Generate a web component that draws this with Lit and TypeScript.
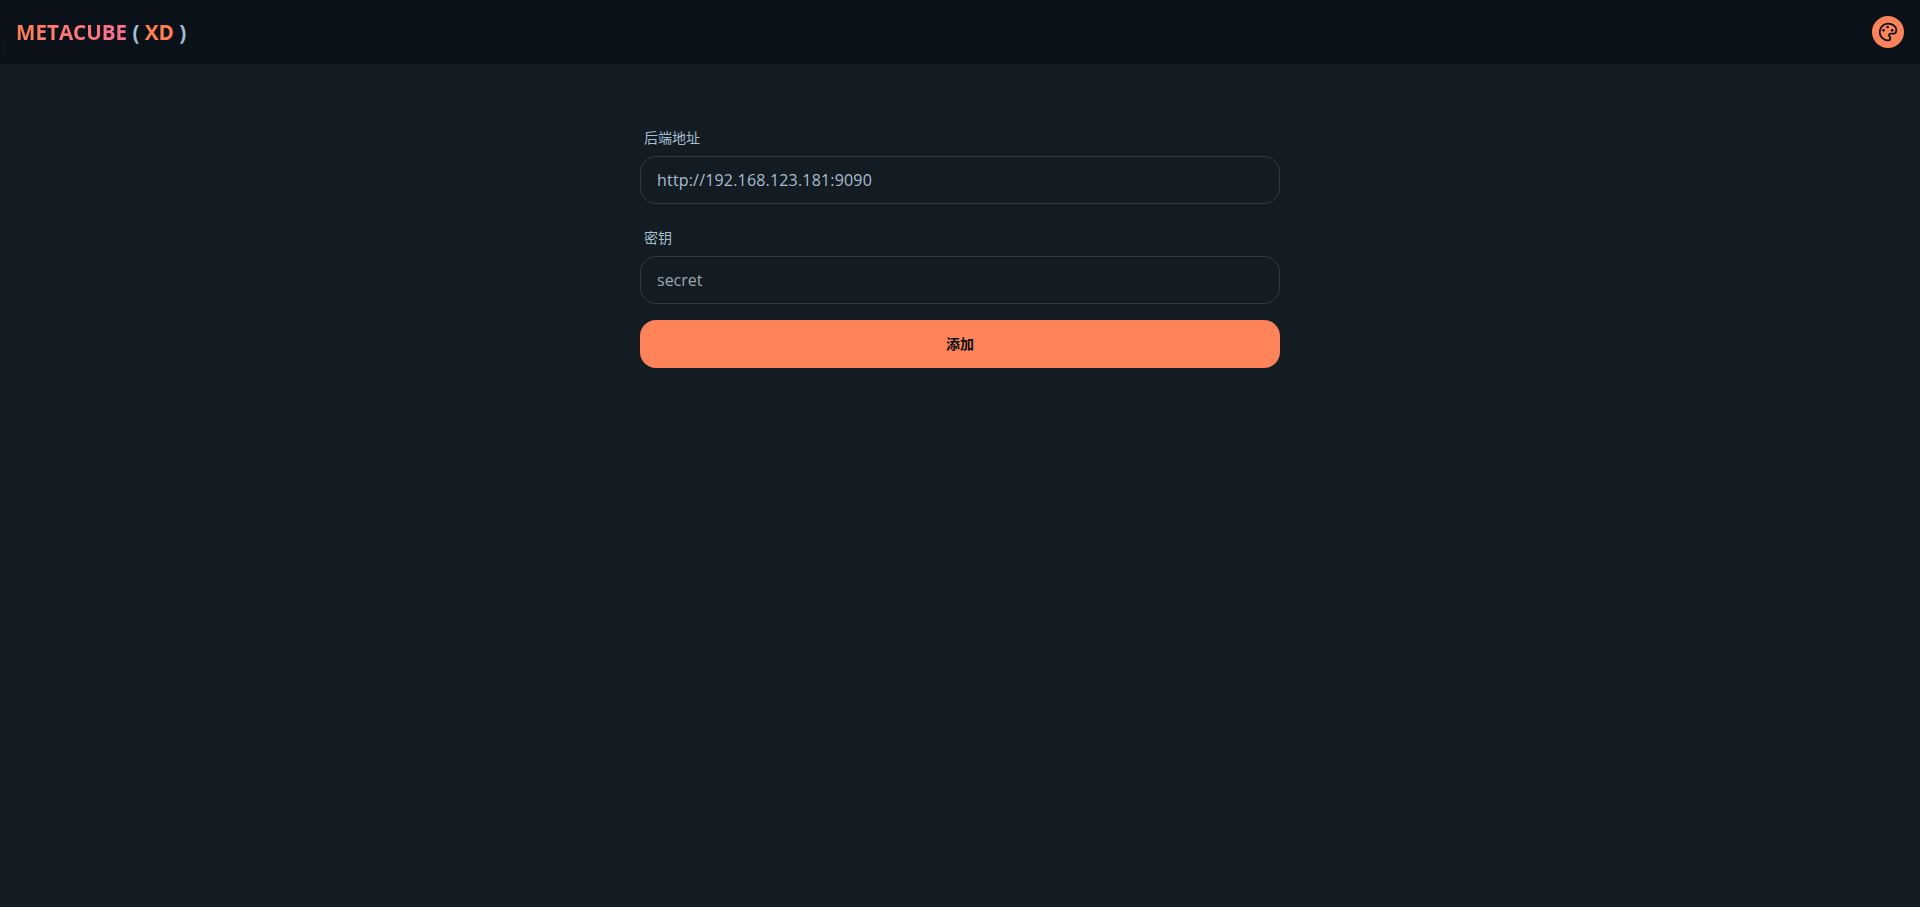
import { LitElement, html, css } from "lit";
import { customElement } from "lit/decorators.js";

const SANS = css`"Open Sans", "Noto Sans", "Noto Sans CJK SC", sans-serif`;

@customElement("app-root")
export class AppRoot extends LitElement {
  static styles = css`
    :host {
      display: block;
      min-height: 907px;
      background: #141c23;
      font-family: ${SANS};
      color: #a6bed1;
    }
    .header {
      position: relative;
      height: 64px;
      background: #0a1118;
      display: flex;
      align-items: center;
      justify-content: space-between;
      padding: 0 16px;
      box-sizing: border-box;
    }
    .ghost {
      position: absolute;
      left: -20px;
      top: 34px;
      width: 25px;
      height: 26px;
      border: 1px solid #131b22;
      border-radius: 4px;
      box-sizing: border-box;
    }
    .logo {
      font-size: 20.6px;
      font-weight: 700;
      line-height: 28px;
      color: #a6bed1;
      white-space: pre;
    }
    .brand {
      background: linear-gradient(to right, #ff7f59, #ff6f90);
      -webkit-background-clip: text;
      background-clip: text;
      color: transparent;
    }
    .xd {
      color: #ff7f50;
    }
    .theme {
      width: 32px;
      height: 32px;
      border-radius: 50%;
      background: #ff8359;
      display: flex;
      align-items: center;
      justify-content: center;
      color: #0a1118;
    }
    .theme svg {
      width: 20px;
      height: 20px;
    }
    .form {
      width: 640px;
      margin: 0 auto;
      padding-top: 56px;
      display: flex;
      flex-direction: column;
    }
    .field {
      display: flex;
      flex-direction: column;
      margin-bottom: 16px;
    }
    .label {
      font-size: 14px;
      line-height: 20px;
      padding: 7px 4px 9px;
      color: #a6bed1;
      font-family: "Noto Sans CJK SC", sans-serif;
    }
    input {
      height: 48px;
      box-sizing: border-box;
      border: 1px solid #2d3a46;
      border-radius: 16px;
      background: #141c23;
      padding: 0 16px;
      font: 400 16px ${SANS};
      color: #a6bed1;
      outline: none;
    }
    input.url {
      letter-spacing: 0.18px;
    }
    input.pw {
      color: #9aa8b4;
    }
    button {
      height: 48px;
      border: none;
      border-radius: 16px;
      background: #ff8359;
      color: #0a1118;
      padding: 0 0 2px;
      font-size: 14px;
      font-weight: 700;
      font-family: "Noto Sans CJK SC", sans-serif;
    }
  `;

  render() {
    return html`
      <div class="header">
        <div class="ghost"></div>
        <div class="logo"><span class="brand">METACUBE</span> ( <span class="xd">XD</span> )</div>
        <div class="theme">
          <svg viewBox="0 0 24 24" fill="none" stroke="currentColor" stroke-width="2.2" stroke-linecap="round" stroke-linejoin="round">
            <path d="M12 2C6.5 2 2 6.5 2 12s4.5 10 10 10c1.6 0 2.8-1.2 2.8-2.6 0-.8-.4-1.3-.8-1.8-.4-.5-.7-1-.7-1.6 0-1.1.9-2 2-2h2.4c2.5 0 4.3-1.8 4.3-4.2C22 5.5 17.5 2 12 2Z" />
            <circle cx="6.6" cy="10" r="1.6" fill="currentColor" stroke="none" />
            <circle cx="11.6" cy="6" r="1.6" fill="currentColor" stroke="none" />
            <circle cx="17" cy="10" r="1.6" fill="currentColor" stroke="none" />
          </svg>
        </div>
      </div>
      <div class="form">
        <div class="field">
          <div class="label">后端地址</div>
          <input class="url" .value=${"http://192.168.123.181:9090"} />
        </div>
        <div class="field">
          <div class="label">密钥</div>
          <input class="pw" .value=${"secret"} />
        </div>
        <button>添加</button>
      </div>
    `;
  }
}
